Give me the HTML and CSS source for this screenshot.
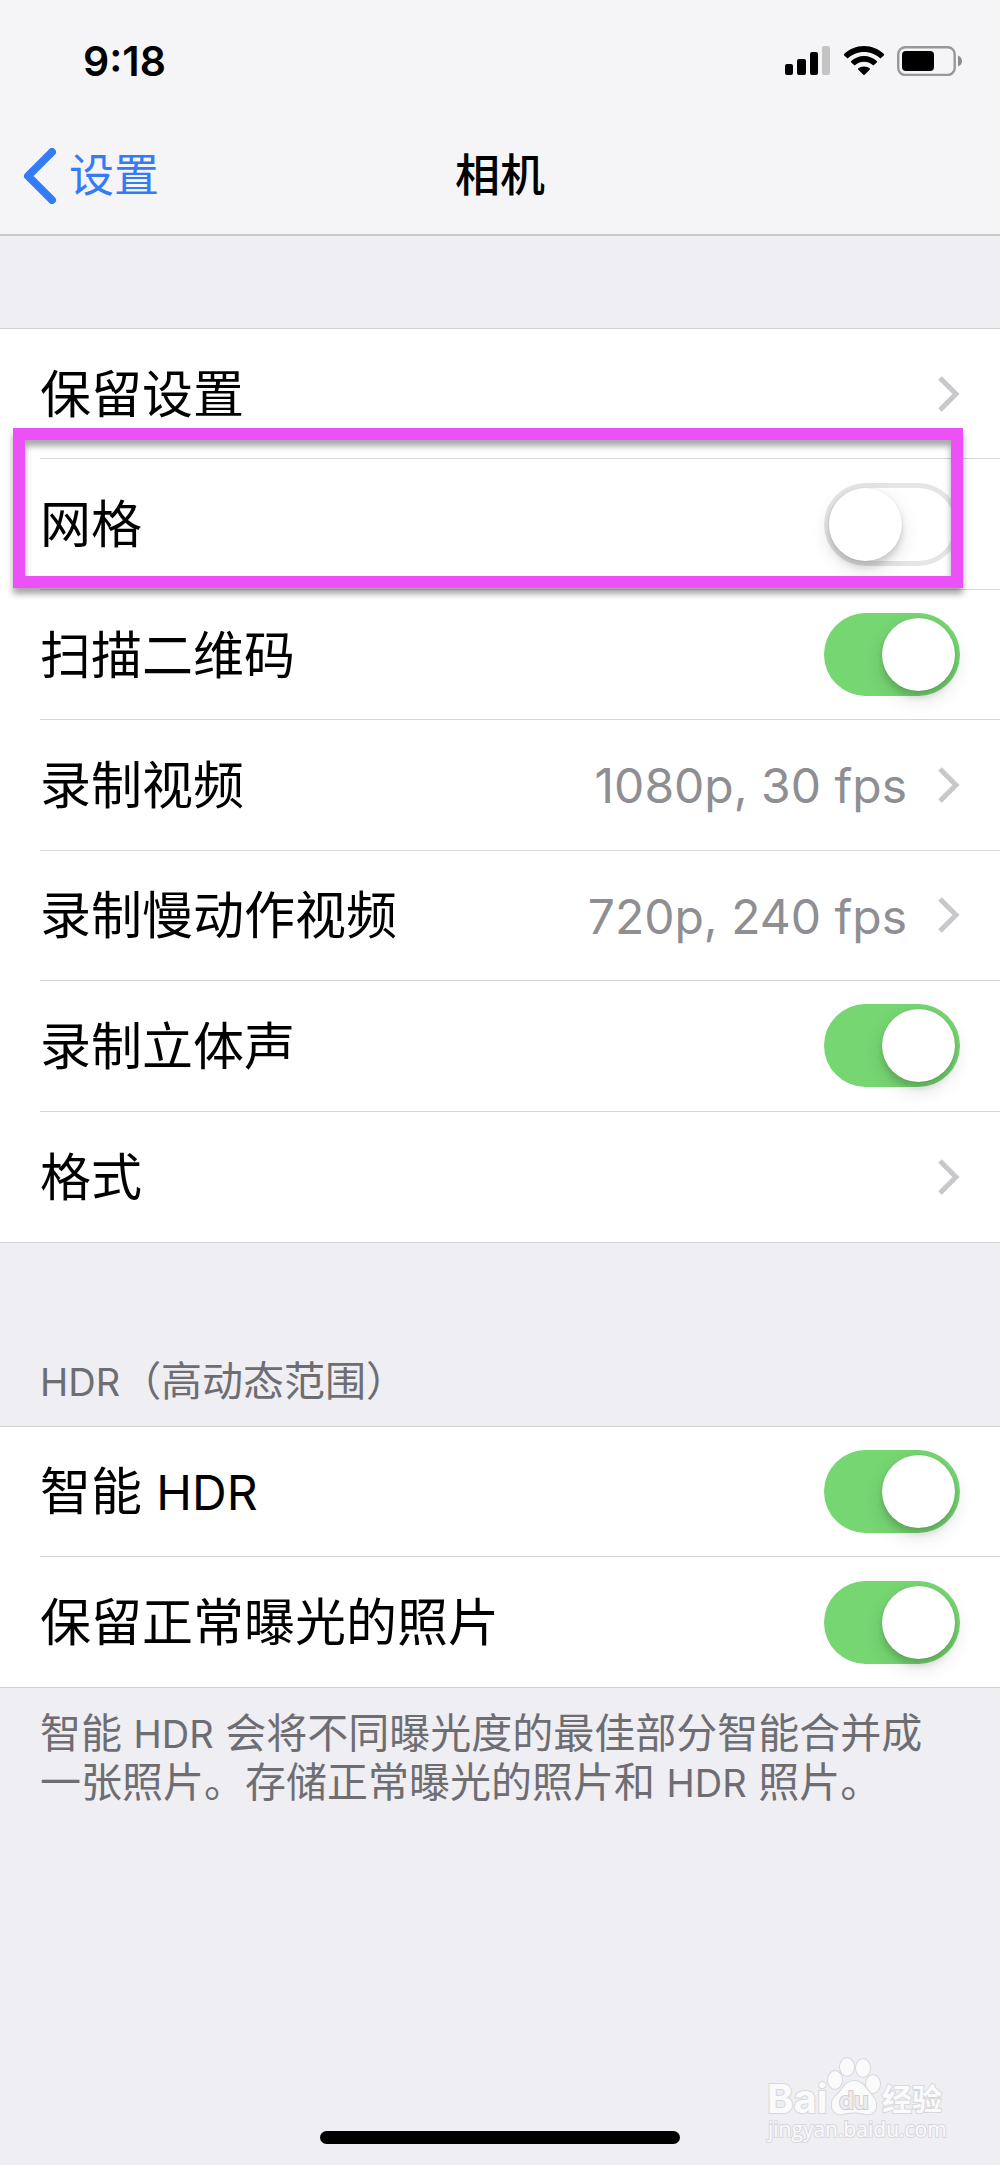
FILE: index.html
```html
<!DOCTYPE html>
<html lang="zh-CN">
<head>
    <meta charset="UTF-8">
    <meta name="viewport" content="width=device-width, initial-scale=1.0">
    <title>相机</title>
    <link rel="stylesheet" href="styles.css">
</head>
<body>
<header class="top-bar">
    <div class="status-bar">
        <span class="time">9:18</span>
        <div class="status-icons">
            <!-- Signal -->
            <svg width="46" height="30" viewBox="0 0 46 30" aria-hidden="true">
                <rect x="0" y="18" width="8" height="11" rx="2"/>
                <rect x="12" y="13" width="9" height="16" rx="2"/>
                <rect x="25" y="6" width="8" height="23" rx="2"/>
                <rect x="37" y="0" width="8" height="29" rx="2" fill="#c4c4c5"/>
            </svg>
            <!-- Wi-Fi -->
            <svg width="40" height="30" viewBox="0 0 40 30" aria-hidden="true">
                <path d="M20 0C12.3 0 5.300 3 0 8L0 9.200L3.600 12.500C8 8.400 13.700 6 20 6S32 8.400 36.400 12.500L40 9.200L40 8C34.700 3 27.700 0 20 0Z"/>
                <path d="M20 10C15 10 10.500 12 7 15.200L7 16.300L10.600 19.600C13.100 17.200 16.400 15.800 20 15.800S26.900 17.200 29.400 19.600L33 16.300L33 15.200C29.500 12 25 10 20 10Z"/>
                <path d="M20 20.500C17.700 20.500 15.700 21.300 14.100 22.600L14.100 23.500L19.400 28.700Q20 29.200 20.600 28.700L25.900 23.500L25.900 22.600C24.300 21.300 22.300 20.500 20 20.500Z"/>
            </svg>
            <!-- Battery -->
            <svg width="66" height="30" viewBox="0 0 66 30" aria-hidden="true">
                <rect x="1.200" y="1.200" width="56.500" height="27.800" rx="7" fill="none" stroke="#98989a" stroke-width="2.400"/>
                <rect x="5" y="5" width="32" height="20" rx="4"/>
                <path d="M61 9.500Q65 11.500 65 15T61 20.500Z" fill="#8c8c8e"/>
            </svg>
        </div>
    </div>
    <nav class="nav-bar">
        <a class="back" href="#">
            <svg width="34" height="56" viewBox="0 0 34 56" aria-hidden="true">
                <path d="M29 4L5 28L29 52"/>
            </svg>
            设置
        </a>
        <h1>相机</h1>
    </nav>
</header>

<main>
    <ul class="group group-camera">
        <li>
            <a class="row" href="#">
                <span class="label">保留设置</span>
                <svg class="chevron" width="22" height="36" viewBox="0 0 22 36" aria-hidden="true"><path d="M2 2L18 18L2 34"/></svg>
            </a>
        </li>
        <li class="highlighted">
            <div class="row">
                <label class="label" for="grid">网格</label>
                <input class="switch" type="checkbox" id="grid">
            </div>
        </li>
        <li>
            <div class="row">
                <label class="label" for="qr">扫描二维码</label>
                <input class="switch" type="checkbox" id="qr" checked>
            </div>
        </li>
        <li>
            <a class="row" href="#">
                <span class="label">录制视频</span>
                <span class="value">1080p, 30 fps</span>
                <svg class="chevron" width="22" height="36" viewBox="0 0 22 36" aria-hidden="true"><path d="M2 2L18 18L2 34"/></svg>
            </a>
        </li>
        <li>
            <a class="row" href="#">
                <span class="label">录制慢动作视频</span>
                <span class="value">720p, 240 fps</span>
                <svg class="chevron" width="22" height="36" viewBox="0 0 22 36" aria-hidden="true"><path d="M2 2L18 18L2 34"/></svg>
            </a>
        </li>
        <li>
            <div class="row">
                <label class="label" for="stereo">录制立体声</label>
                <input class="switch" type="checkbox" id="stereo" checked>
            </div>
        </li>
        <li>
            <a class="row" href="#">
                <span class="label">格式</span>
                <svg class="chevron" width="22" height="36" viewBox="0 0 22 36" aria-hidden="true"><path d="M2 2L18 18L2 34"/></svg>
            </a>
        </li>
    </ul>

    <h2><span class="latin-small">HDR</span>（高动态范围）</h2>
    <ul class="group">
        <li>
            <div class="row">
                <label class="label" for="hdr">智能 <span class="latin">HDR</span></label>
                <input class="switch" type="checkbox" id="hdr" checked>
            </div>
        </li>
        <li>
            <div class="row">
                <label class="label" for="keep">保留正常曝光的照片</label>
                <input class="switch" type="checkbox" id="keep" checked>
            </div>
        </li>
    </ul>
    <p class="note">智能 <span class="latin-small">HDR</span> 会将不同曝光度的最佳部分智能合并成一张照片。存储正常曝光的照片和 <span class="latin-small">HDR</span> 照片。</p>
</main>

<footer>
    <div class="home-indicator"></div>
    <svg class="watermark" width="260" height="125" viewBox="0 0 260 125" role="img" aria-label="Baidu 经验">
        <g class="mark">
            <text x="27" y="73" font-size="40" font-weight="700">Bai</text>
            <text class="cjk" x="142" y="70" font-size="30" font-weight="700">经验</text>
            <text class="url" x="28" y="97" font-size="21">jingyan.baidu.com</text>
            <ellipse cx="95" cy="40" rx="7" ry="9"/>
            <ellipse cx="107" cy="27" rx="7" ry="9"/>
            <ellipse cx="123" cy="28" rx="7" ry="9"/>
            <ellipse cx="133" cy="44" rx="7" ry="9"/>
            <path d="M114 41C105 41 103 49 98 54C93 58 91 62 92 67C93 73 98 75 103 74C110 72 118 72 125 74C131 75 136 72 136 66C137 60 133 57 130 53C125 48 123 41 114 41Z"/>
            <text class="du" x="99" y="69" font-size="24" font-weight="600">du</text>
        </g>
    </svg>
</footer>
</body>
</html>
```

FILE: styles.css
```css
* {
    box-sizing: border-box;
}

body {
    font-family: Inter, 'Noto Sans CJK SC', sans-serif;
    background-color: #efeef3;
    color: #000;
    margin: 0;
    min-height: 100vh;
    display: flex;
    flex-direction: column;
    position: relative;
}

a {
    color: inherit;
    text-decoration: none;
}

.top-bar {
    background-color: #f5f5f7;
    border-bottom: 2px solid #c8c8cc;
}

.status-bar {
    display: flex;
    justify-content: space-between;
    align-items: center;
    height: 118px;
    padding: 4px 37px 0 83px;
}

.time {
    font-size: 41px;
    font-weight: 600;
}

.status-icons {
    display: flex;
    gap: 13px;
}

.nav-bar {
    display: grid;
    grid-template-columns: 1fr auto 1fr;
    align-items: center;
    height: 116px;
    padding: 0 23px;
    font-size: 45px;
    line-height: 60px;
}

.back {
    display: flex;
    align-items: center;
    gap: 12px;
    color: #347bf7;
}

.back path {
    fill: none;
    stroke: #347bf7;
    stroke-width: 8;
    stroke-linecap: round;
    stroke-linejoin: round;
}

h1 {
    font-size: 45px;
    font-weight: 500;
    margin: 0;
}

main {
    flex: 1;
    padding-top: 92px;
}

.group {
    list-style: none;
    margin: 0;
    padding: 0;
    display: grid;
    grid-auto-rows: 1fr;
    background-color: #fff;
    border-top: 1px solid #d2d2d5;
    border-bottom: 1px solid #d2d2d5;
}

.group-camera {
    min-height: 915px;
}

.group li {
    padding-left: 40px;
    display: grid;
}

.row {
    display: flex;
    align-items: center;
    min-height: 130px;
    padding-right: 40px;
    border-bottom: 1px solid #d6d6d9;
}

.group li:last-child .row {
    border-bottom: none;
}

.label {
    flex: 1;
    padding-top: 2px;
    font-size: 51px;
    line-height: 72px;
}

.latin {
    font-size: 48px;
}

.latin-small {
    font-size: 38px;
}

.value {
    color: #8e8e93;
    padding-top: 2px;
    font-size: 48px;
    margin-right: 31px;
}

.chevron path {
    fill: none;
    stroke: #c7c7cc;
    stroke-width: 5;
}

.switch {
    appearance: none;
    width: 136px;
    height: 83px;
    margin: 0;
    padding: 5px;
    border-radius: 42px;
    background-color: #fff;
    box-shadow: inset 0 0 0 5px #e5e5e5;
    display: flex;
    align-items: center;
}

.switch::before {
    content: '';
    width: 73px;
    height: 73px;
    border-radius: 50%;
    background-color: #fff;
    box-shadow: 0 8px 20px rgba(0, 0, 0, 0.12), 0 6px 6px rgba(0, 0, 0, 0.12), 0 0 2px rgba(0, 0, 0, 0.12);
}

.switch:checked {
    justify-content: flex-end;
    background-color: #76d672;
    box-shadow: none;
}

/* Frame drawn over the grid row */
.highlighted {
    position: relative;
}

.highlighted::after {
    content: '';
    position: absolute;
    top: -31px;
    right: 37px;
    bottom: 2px;
    left: 13px;
    border: 12px solid #ec50f7;
    filter: drop-shadow(0 6px 3px rgba(0, 0, 0, 0.35));
    pointer-events: none;
}

h2 {
    margin: 0;
    padding: 114px 40px 20px;
    color: #6d6d72;
    font-size: 41px;
    font-weight: 400;
    line-height: 48px;
}

.note {
    margin: 0;
    padding: 21px 40px;
    color: #6d6d72;
    font-size: 41px;
    line-height: 48px;
}

footer {
    padding-bottom: 21px;
}

.home-indicator {
    width: 36%;
    height: 13px;
    margin: 0 auto;
    border-radius: 7px;
    background-color: #000;
}

.watermark {
    position: absolute;
    right: 0;
    bottom: 0;
}

.mark {
    fill: #fafafa;
    stroke: #d8d8da;
    stroke-width: 2;
    paint-order: stroke;
}

.mark .cjk {
    font-family: 'Noto Sans CJK SC', sans-serif;
}

.mark .url {
    font-family: 'Open Sans', sans-serif;
}

.mark .du {
    fill: #ececef;
    stroke: #cfcfd2;
}
```
